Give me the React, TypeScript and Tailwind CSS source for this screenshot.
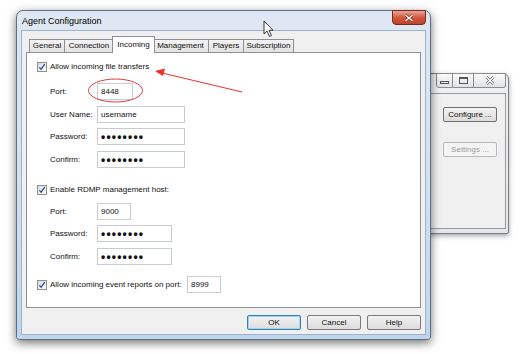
import React from "react";

function Check() {
  return (
    <span className="w-[10px] h-[10px] shrink-0 border border-[#8e8f8f] bg-linear-to-br from-[#d8dbe0] to-[#fbfbfb] flex items-center justify-center">
      <svg width="8" height="8" viewBox="0 0 8 8">
        <path d="M1.4 4.3 L3.1 6.3 L6.7 1.1" stroke="#2a4a8f" strokeWidth="1.3" fill="none" />
      </svg>
    </span>
  );
}

function Field({ w, children }: { w: string; children: React.ReactNode }) {
  return (
    <div className={`h-[17px] border border-[#c6ccd4] bg-white flex items-center pl-[3px] ${w}`}>
      {children}
    </div>
  );
}

function Dots() {
  return <span className="font-bold text-[12px] tracking-[1.2px] leading-none">••••••••</span>;
}

function Row({ label, mt, children }: { label: string; mt: string; children: React.ReactNode }) {
  return (
    <div className={`flex items-center h-[17px] pl-[23px] ${mt}`}>
      <span className="w-[47px]">{label}</span>
      {children}
    </div>
  );
}

function Tab({ label, cls }: { label: string; cls: string }) {
  return (
    <div
      className={`h-[13px] border-t border-r border-[#8c8f96] bg-linear-to-b from-[#f4f4f4] to-[#e2e2e2] flex items-center justify-center ${cls}`}
    >
      {label}
    </div>
  );
}

function Btn({ label, cls }: { label: string; cls: string }) {
  return (
    <div
      className={`w-[54px] h-[15px] rounded-[2px] border bg-linear-to-b from-[#f3f3f3] to-[#dcdcdc] flex items-center justify-center ${cls}`}
    >
      {label}
    </div>
  );
}

export default function App() {
  return (
    <div className="relative w-[520px] h-[354px] bg-white overflow-hidden font-['Liberation_Sans',Arial,sans-serif] text-[8px] text-[#111]">
      {/* Background window */}
      <div className="absolute left-[390px] top-[73px] w-[119px] h-[161px] rounded-tr-[6px] rounded-br-[2px] border border-[#7d7d7d] bg-linear-to-b from-[#eef1f4] to-[#e3e7eb] flex flex-col shadow-[0_2px_5px_rgba(0,0,0,0.35)]">
        <div className="h-[19px] flex justify-end pr-[2px]">
          <div className="flex -mt-[1px] h-[15px]">
            <div className="w-[17px] border border-[#8c8c8c] rounded-bl-[3px] bg-linear-to-b from-[#fbfbfb] to-[#e2e2e2] flex items-end justify-center pb-[3px]">
              <span className="w-[9px] h-[3px] border border-[#555]" />
            </div>
            <div className="w-[21px] border-y border-r border-[#8c8c8c] bg-linear-to-b from-[#fbfbfb] to-[#e2e2e2] flex items-center justify-center">
              <span className="w-[9px] h-[7px] border border-[#555] border-t-2" />
            </div>
            <div className="w-[32px] border-y border-r border-[#8c8c8c] rounded-br-[3px] bg-linear-to-b from-[#fbfbfb] to-[#e2e2e2] flex items-center justify-center">
              <svg width="10" height="9" viewBox="0 0 10 9">
                <path d="M1.5 1 L8.5 8 M8.5 1 L1.5 8" stroke="#666" strokeWidth="2.6" />
                <path d="M1.5 1 L8.5 8 M8.5 1 L1.5 8" stroke="#fff" strokeWidth="1.2" />
              </svg>
            </div>
          </div>
        </div>
        <div className="flex-1 mr-[2px] mb-[4px] border border-[#9a9a9a] bg-[#f0f0f0] flex flex-col items-end pt-[13px] pr-[8px]">
          <div className="w-[54px] h-[15px] rounded-[2px] border border-[#707070] bg-linear-to-b from-[#f3f3f3] to-[#dcdcdc] flex items-center justify-center">
            Configure ...
          </div>
          <div className="w-[54px] h-[15px] mt-[20px] rounded-[2px] border border-[#b5b9bd] bg-[#f4f4f4] text-[#9c9c9c] flex items-center justify-center">
            Settings ...
          </div>
        </div>
      </div>

      {/* Main window */}
      <div className="absolute left-[16px] top-[10px] w-[415px] h-[330px] rounded-t-[7px] rounded-b-[3px] border border-[#5d6f84] bg-linear-to-b from-[#dfe8f2] via-[#d3e1f0] to-[#bfd5ec] flex flex-col shadow-[0_3px_10px_rgba(0,0,0,0.55)]">
        <div className="h-[19px] flex justify-between">
          <span className="pl-[5px] pt-[4px] text-[9px] text-black">Agent Configuration</span>
          <div className="-mt-[1px] mr-[4px] w-[34px] h-[15px] rounded-b-[4px] border border-[#7a2a1c] bg-linear-to-b from-[#e8a597] via-[#d2583f] to-[#c0402a] flex items-center justify-center">
            <svg width="10" height="8" viewBox="0 0 10 8">
              <path d="M1.5 1 L8.5 7 M8.5 1 L1.5 7" stroke="#7a2a1c" strokeWidth="2.8" />
              <path d="M1.5 1 L8.5 7 M8.5 1 L1.5 7" stroke="#fff" strokeWidth="1.5" />
            </svg>
          </div>
        </div>
        <div className="flex-1 mx-[4px] mb-[4px] border border-[#9db3cb] bg-[#f0f0f0] flex flex-col px-[4px] pt-[5px]">
          {/* tabs */}
          <div className="h-[16px] flex items-end pl-[3px]">
            <Tab label="General" cls="w-[36px] border-l" />
            <Tab label="Connection" cls="w-[49px]" />
            <div className="relative z-10 w-[43px] -mx-[2px] h-[17px] -mb-[1px] border-x border-t border-[#8c8f96] bg-white flex items-start justify-center pt-[2px]">
              Incoming
            </div>
            <Tab label="Management" cls="w-[56px]" />
            <Tab label="Players" cls="w-[35px]" />
            <Tab label="Subscription" cls="w-[50px]" />
          </div>
          {/* panel */}
          <div className="h-[256px] border border-[#8c8f96] bg-white flex flex-col">
            <div className="flex items-center gap-[3px] h-[14px] mt-[7px] pl-[10px]">
              <Check />
              <span>Allow incoming file transfers</span>
            </div>
            <Row label="Port:" mt="mt-[9px]">
              <Field w="w-[36px]">8448</Field>
            </Row>
            <Row label="User Name:" mt="mt-[6px]">
              <Field w="w-[88px]">username</Field>
            </Row>
            <Row label="Password:" mt="mt-[5px]">
              <Field w="w-[88px]"><Dots /></Field>
            </Row>
            <Row label="Confirm:" mt="mt-[6px]">
              <Field w="w-[88px]"><Dots /></Field>
            </Row>
            <div className="flex items-center gap-[3px] h-[14px] mt-[15px] pl-[10px]">
              <Check />
              <span>Enable RDMP management host:</span>
            </div>
            <Row label="Port:" mt="mt-[6px]">
              <Field w="w-[34px]">9000</Field>
            </Row>
            <Row label="Password:" mt="mt-[5px]">
              <Field w="w-[75px]"><Dots /></Field>
            </Row>
            <Row label="Confirm:" mt="mt-[6px]">
              <Field w="w-[75px]"><Dots /></Field>
            </Row>
            <div className="flex items-center h-[17px] mt-[11px] pl-[10px]">
              <Check />
              <span className="ml-[3px] w-[137px]">Allow incoming event reports on port:</span>
              <Field w="w-[34px]">8999</Field>
            </div>
          </div>
          {/* buttons */}
          <div className="mt-[7px] flex justify-end gap-[6px]">
            <Btn label="OK" cls="border-[#3c7fb1] shadow-[inset_0_0_0_1px_#9fd5f2]" />
            <Btn label="Cancel" cls="border-[#7a7a7a]" />
            <Btn label="Help" cls="border-[#7a7a7a]" />
          </div>
        </div>
      </div>

      {/* Annotations overlay */}
      <svg className="absolute left-0 top-0 pointer-events-none" width="520" height="354" viewBox="0 0 520 354">
        <ellipse cx="115.5" cy="90.5" rx="27" ry="11.5" fill="none" stroke="#e23b3b" strokeWidth="1" />
        <line x1="242" y1="92" x2="162" y2="73" stroke="#ec3a36" strokeWidth="1.2" />
        <polygon points="155,71 165,68.5 163,76" fill="#ec2f2a" />
        {/* mouse cursor */}
        <path
          d="M264 21 L264 34 L267 31 L269.5 36.5 L271.5 35.6 L269 30.2 L273 30.2 Z"
          fill="#fff"
          stroke="#222"
          strokeWidth="0.9"
          strokeLinejoin="round"
        />
      </svg>
    </div>
  );
}
